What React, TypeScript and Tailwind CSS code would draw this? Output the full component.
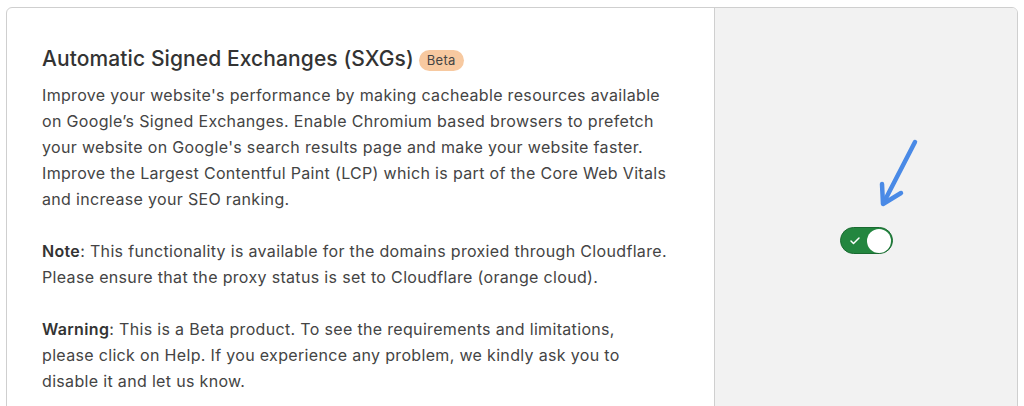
import { Check } from 'lucide-react'

export default function App() {
  return (
    <div className="w-[1024px] h-[406px] bg-white overflow-hidden pt-[7px] pl-[6px] pr-[6px]" style={{ fontFamily: 'Inter, "Noto Sans", sans-serif' }}>
      <div className="flex h-[420px] border border-[#cfcfcf] rounded-[6px] overflow-hidden">
        <div className="w-[707px] shrink-0 pl-[35px] pr-[10px] pt-[36px]">
          <div className="flex items-center gap-[5px]">
            <h2 className="text-[21px] leading-[30px] font-medium text-[#333] tracking-[0.1px] whitespace-nowrap">Automatic Signed Exchanges (SXGs)</h2>
            <span className="rounded-full bg-[#f7c9a0] px-[8px] text-[13px] leading-[21px] text-[#444] mt-[2px] tracking-[0.3px]">Beta</span>
          </div>
          <div className="text-[16px] leading-[26px] text-[#444] mt-[8px] tracking-[0.33px] whitespace-nowrap">
            <p>
              Improve your website's performance by making cacheable resources available<br />
              on Google’s Signed Exchanges. Enable Chromium based browsers to prefetch<br />
              your website on Google's search results page and make your website faster.<br />
              Improve the Largest Contentful Paint (LCP) which is part of the Core Web Vitals<br />
              and increase your SEO ranking.
            </p>
            <p className="mt-[26px]">
              <strong className="font-semibold text-[#333]">Note</strong>: This functionality is available for the domains proxied through Cloudflare.<br />
              Please ensure that the proxy status is set to Cloudflare (orange cloud).
            </p>
            <p className="mt-[26px]">
              <strong className="font-semibold text-[#333]">Warning</strong>: This is a Beta product. To see the requirements and limitations,<br />
              please click on Help. If you experience any problem, we kindly ask you to<br />
              disable it and let us know.
            </p>
          </div>
        </div>
        <div className="relative flex-1 bg-[#f2f2f2] border-l border-[#cfcfcf] flex justify-center pt-[219px]">
          {/* annotation arrow */}
          <svg className="absolute left-[164px] top-[130px]" width="44" height="76" viewBox="0 0 44 76" fill="none">
            <path d="M36 4 L5 64" stroke="#4a8ae6" strokeWidth="4.5" strokeLinecap="round" />
            <path d="M3 46 L4 66 L22 55" stroke="#4a8ae6" strokeWidth="4.5" strokeLinecap="round" strokeLinejoin="round" />
          </svg>
          <div className="w-[53px] h-[27px] rounded-full bg-[#23863f] border border-[#1a6a31] flex items-center justify-between pl-[8px] pr-[1px]">
            <Check className="w-[12px] h-[12px] text-white" strokeWidth={3} />
            <div className="w-[24px] h-[24px] rounded-full bg-white" />
          </div>
        </div>
      </div>
    </div>
  )
}
